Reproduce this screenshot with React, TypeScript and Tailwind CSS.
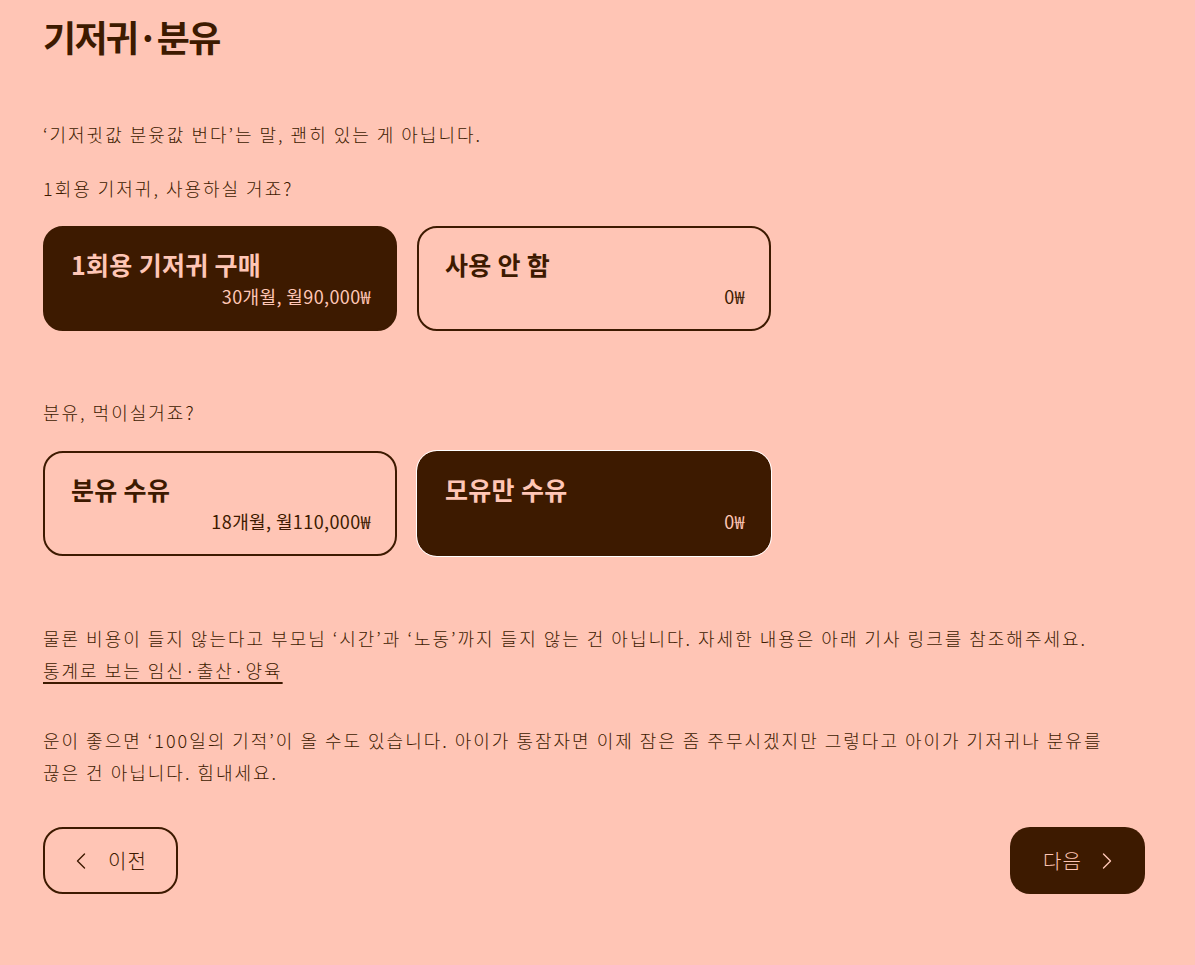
import React, { useState } from 'react';
import { ChevronLeft, ChevronRight } from 'lucide-react';

type Option = { title: string; detail: string };

const DIAPER_OPTIONS: Option[] = [
  { title: '1회용 기저귀 구매', detail: '30개월, 월90,000₩' },
  { title: '사용 안 함', detail: '0₩' },
];

const FORMULA_OPTIONS: Option[] = [
  { title: '분유 수유', detail: '18개월, 월110,000₩' },
  { title: '모유만 수유', detail: '0₩' },
];

const OptionCard = ({
  option,
  active,
  focused,
  onClick,
}: {
  option: Option;
  active: boolean;
  focused?: boolean;
  onClick: () => void;
}) => (
  <button
    onClick={onClick}
    className={`w-[354px] h-[105px] rounded-[20px] border-2 border-[#3d1a00] pl-[26px] pr-[24px] pt-[16px] text-left flex flex-col ${
      active ? 'bg-[#3d1a00] text-[#ffc6b6]' : 'bg-transparent text-[#3d1a00]'
    } ${focused ? 'outline outline-1 outline-white' : ''}`}
  >
    <span className="text-[25px] font-bold leading-[40px] tracking-[0.3px]">{option.title}</span>
    <span className="self-end text-[18px] leading-[24px] tracking-[0.4px]">{option.detail}</span>
  </button>
);

export default function App() {
  const [diaper, setDiaper] = useState(0);
  const [formula, setFormula] = useState(1);

  return (
    <div
      className="min-h-screen bg-[#ffc5b5] text-[#3d1a00]"
      style={{ fontFamily: '"Noto Sans CJK KR", "Noto Sans", sans-serif' }}
    >
      <div className="pl-[43px] pr-[50px] pt-[12px] pb-[70px]">
        <h1 className="text-[36px] font-bold leading-[48px] tracking-[-1.7px]">기저귀·분유</h1>

        <p className="mt-[58px] text-[18px] font-light leading-[32px] tracking-[2px]">
          ‘기저귓값 분윳값 번다’는 말, 괜히 있는 게 아닙니다.
        </p>

        <p className="mt-[22px] text-[18px] font-light leading-[32px] tracking-[2px]">
          1회용 기저귀, 사용하실 거죠?
        </p>

        <div className="mt-[22px] flex gap-[20px]">
          {DIAPER_OPTIONS.map((o, i) => (
            <OptionCard key={o.title} option={o} active={diaper === i} onClick={() => setDiaper(i)} />
          ))}
        </div>

        <p className="mt-[65px] text-[18px] font-light leading-[32px] tracking-[2px]">분유, 먹이실거죠?</p>

        <div className="mt-[23px] flex gap-[20px]">
          {FORMULA_OPTIONS.map((o, i) => (
            <OptionCard
              key={o.title}
              option={o}
              active={formula === i}
              focused={formula === i}
              onClick={() => setFormula(i)}
            />
          ))}
        </div>

        <div className="mt-[66px] text-[18px] font-light leading-[32px] tracking-[2px]">
          <p>
            물론 비용이 들지 않는다고 부모님 ‘시간’과 ‘노동’까지 들지 않는 건 아닙니다. 자세한 내용은 아래 기사 링크를 참조해주세요.
          </p>
          <p>
            <a href="#" className="underline underline-offset-[4px] decoration-[1.5px]">
              통계로 보는 임신·출산·양육
            </a>
          </p>
        </div>

        <p className="mt-[38px] text-[18px] font-light leading-[32px] tracking-[2px] max-w-[1075px]">
          운이 좋으면 ‘100일의 기적’이 올 수도 있습니다. 아이가 통잠자면 이제 잠은 좀 주무시겠지만 그렇다고 아이가 기저귀나 분유를 끊은 건 아닙니다. 힘내세요.
        </p>

        <div className="mt-[39px] flex justify-between">
          <button className="w-[135px] h-[67px] rounded-[20px] border-2 border-[#3d1a00] flex items-center pl-[22px] gap-[13px] text-[20px] font-light tracking-[1px]">
            <ChevronLeft className="w-[28px] h-[28px]" strokeWidth={1.2} />
            <span>이전</span>
          </button>
          <button className="w-[135px] h-[67px] rounded-[20px] bg-[#3d1a00] text-[#ffc6b6] flex items-center pl-[33px] gap-[11px] text-[20px] font-light tracking-[1px]">
            <span>다음</span>
            <ChevronRight className="w-[28px] h-[28px]" strokeWidth={1.2} />
          </button>
        </div>
      </div>
    </div>
  );
}
